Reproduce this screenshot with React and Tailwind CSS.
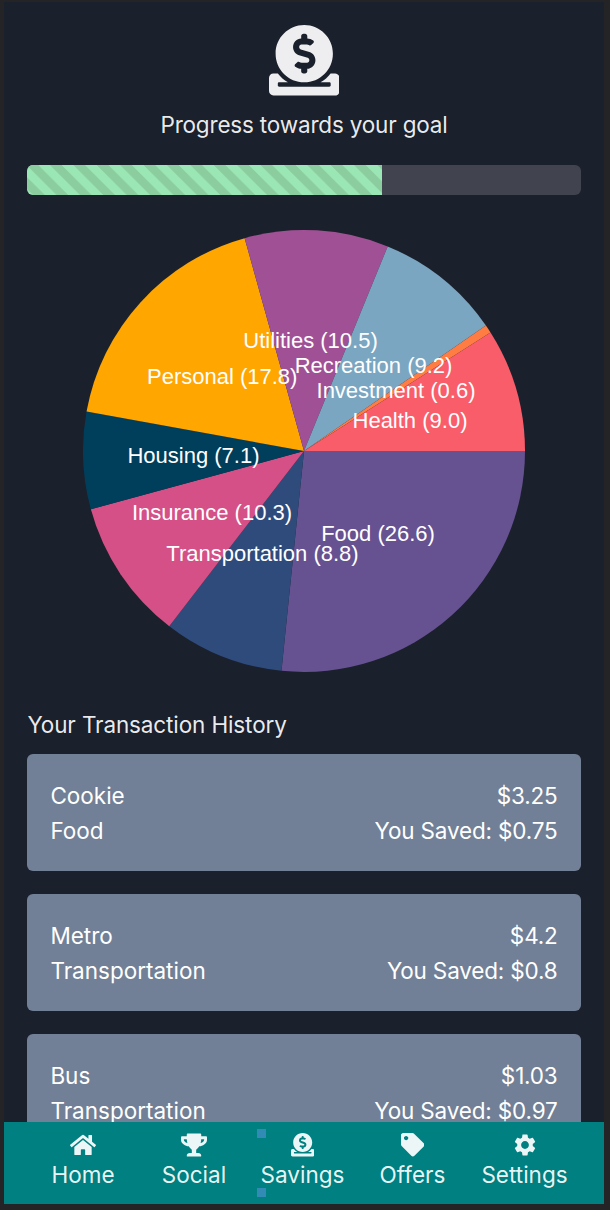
import React from "react";
import { FaDonate, FaHome, FaTrophy, FaTag } from "react-icons/fa";
import { MdSettings } from "react-icons/md";

const slices = [
  { name: "Food", value: 26.6, color: "#665191", x: 378, y: 541 },
  { name: "Transportation", value: 8.8, color: "#2f4b7c", x: 262.5, y: 561 },
  { name: "Insurance", value: 10.3, color: "#d45087", x: 212, y: 520 },
  { name: "Housing", value: 7.1, color: "#003f5c", x: 193.5, y: 463 },
  { name: "Personal", value: 17.8, color: "#ffa600", x: 222.2, y: 384 },
  { name: "Utilities", value: 10.5, color: "#a05195", x: 310.5, y: 348 },
  { name: "Recreation", value: 9.2, color: "#7aa6c2", x: 373.5, y: 373 },
  { name: "Investment", value: 0.6, color: "#ff7c43", x: 396, y: 398 },
  { name: "Health", value: 9.0, color: "#f95d6a", x: 410, y: 428 },
];

const CX = 304;
const CY = 451;
const R = 221;
const total = slices.reduce((sum, s) => sum + s.value, 0);

function arcs() {
  let start = 0;
  return slices.map((s) => {
    const end = start + (s.value / total) * Math.PI * 2;
    const d = `M${CX} ${CY}L${CX + R * Math.cos(start)} ${CY + R * Math.sin(start)}A${R} ${R} 0 0 1 ${CX + R * Math.cos(end)} ${CY + R * Math.sin(end)}Z`;
    start = end;
    return { ...s, d };
  });
}

function SpendingPie() {
  return (
    <svg viewBox="83 230 442 442" className="block size-[442px] shrink-0 overflow-visible">
      {arcs().map((s) => (
        <path key={s.name} d={s.d} fill={s.color} />
      ))}
      {slices.map((s) => (
        <text
          key={s.name}
          x={s.x}
          y={s.y}
          textAnchor="middle"
          className="fill-white font-['Liberation_Sans',sans-serif] text-[22px]"
        >
          {`${s.name} (${s.value.toFixed(1)})`}
        </text>
      ))}
    </svg>
  );
}

const transactions = [
  { name: "Cookie", category: "Food", price: "$3.25", saved: "$0.75" },
  { name: "Metro", category: "Transportation", price: "$4.2", saved: "$0.8" },
  { name: "Bus", category: "Transportation", price: "$1.03", saved: "$0.97" },
];

function Transaction({ item }) {
  return (
    <div className="flex h-[117px] shrink-0 flex-col justify-center rounded-[6px] bg-[#718096] px-[23px] text-white">
      <div className="flex justify-between">
        <span>{item.name}</span>
        <span className="tracking-[-0.17px]">{item.price}</span>
      </div>
      <div className="flex justify-between">
        <span>{item.category}</span>
        <span className="tracking-[-0.17px]">You Saved: {item.saved}</span>
      </div>
    </div>
  );
}

const tabs = [
  { label: "Home", Icon: FaHome, width: "w-[112px]", icon: "size-[26px]" },
  { label: "Social", Icon: FaTrophy, width: "w-[110px]", icon: "size-[26px]" },
  { label: "Savings", Icon: FaDonate, width: "w-[107px]", icon: "size-[23.4px]" },
  { label: "Offers", Icon: FaTag, width: "w-[113px]", icon: "size-[23.4px]" },
  { label: "Settings", Icon: MdSettings, width: "w-[111px]", icon: "size-[26px]" },
];

function NavBar() {
  return (
    <nav className="relative flex h-[82px] shrink-0 bg-[#008080] pl-[23px] text-white/93">
      {tabs.map(({ label, Icon, width, icon }) => (
        <div key={label} className={`flex shrink-0 flex-col items-center pt-[10px] ${width}`}>
          <div className="flex h-[26px] items-center">
            <Icon className={icon} />
          </div>
          <span className="-mt-px whitespace-nowrap">{label}</span>
        </div>
      ))}
      <span className="absolute left-[253px] top-[7px] size-[9px] bg-[#318bb5]" />
      <span className="absolute left-[253px] top-[65.5px] size-[9px] bg-[#318bb5]" />
    </nav>
  );
}

export default function App() {
  return (
    <div className="h-[1210px] w-[610px] overflow-hidden bg-[#242325] pl-1 pt-[2px] font-['Inter',sans-serif] text-[22.5px] leading-[35px]">
      <div className="flex h-[1202px] w-[600px] flex-col bg-[#1a202c]">
        <main className="flex h-[1120px] shrink-0 flex-col overflow-hidden px-[23.4px] pt-[23px] text-white/92">
          <div className="flex shrink-0 flex-col items-center">
            <FaDonate className="size-[70.5px] text-[#eeeef0]" />
            <p className="mt-[11.5px] whitespace-nowrap tracking-[-0.18px]">Progress towards your goal</p>
          </div>
          <div className="mt-[23px] h-[30px] shrink-0 overflow-hidden rounded-[6px] bg-[#41444e]">
            <div className="h-full w-[64.1%] bg-[#9ae6b4] bg-[linear-gradient(45deg,#8ccda0_25%,transparent_25%,transparent_50%,#8ccda0_50%,#8ccda0_75%,transparent_75%,transparent)] bg-[length:23.4px_23.4px]" />
          </div>
          <div className="mt-[35px] flex shrink-0 justify-center">
            <SpendingPie />
          </div>
          <h2 className="mt-[35px] shrink-0 tracking-[-0.12px]">Your Transaction History</h2>
          <div className="mt-[12px] flex flex-col gap-[23px]">
            {transactions.map((item) => (
              <Transaction key={item.name} item={item} />
            ))}
          </div>
        </main>
        <NavBar />
      </div>
    </div>
  );
}
